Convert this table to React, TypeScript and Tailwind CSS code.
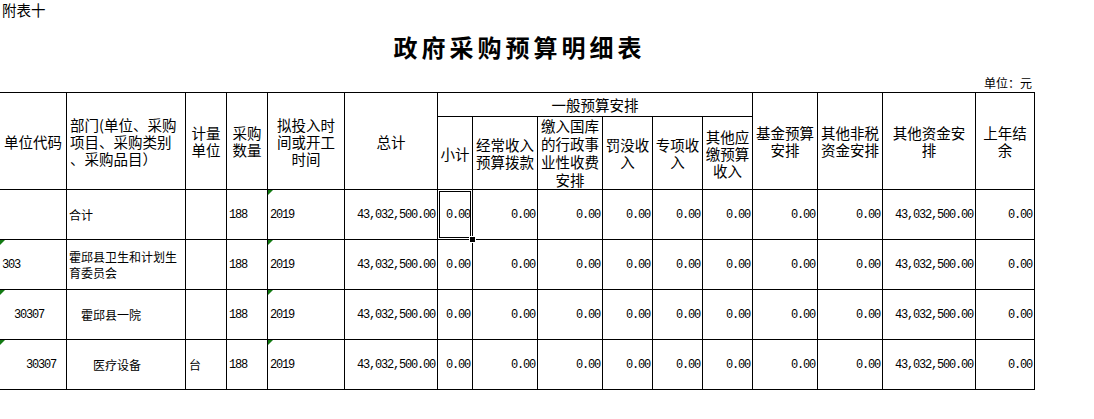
const cjk = "font-['Noto_Sans_CJK_SC',sans-serif]";
const mono = "font-['Liberation_Mono','Noto_Sans_CJK_SC',monospace] text-[12px] tracking-[-1.2px]";

type Row = {
  code: string;
  codePad: string;
  name: string;
  namePad: string;
  unit: string;
  codeMark: boolean;
};

const rows: Row[] = [
  { code: "", codePad: "pl-[2px]", name: "合计", namePad: "pl-[2px]", unit: "", codeMark: false },
  { code: "303", codePad: "pl-[2px]", name: "霍邱县卫生和计划生育委员会", namePad: "pl-[2px]", unit: "", codeMark: true },
  { code: "30307", codePad: "pl-[14px]", name: "霍邱县一院", namePad: "pl-[14px]", unit: "", codeMark: true },
  { code: "30307", codePad: "pl-[26px]", name: "医疗设备", namePad: "pl-[26px]", unit: "台", codeMark: true },
];

const amounts = [
  "43,032,500.00",
  "0.00",
  "0.00",
  "0.00",
  "0.00",
  "0.00",
  "0.00",
  "0.00",
  "0.00",
  "43,032,500.00",
  "0.00",
];

function Mark() {
  return (
    <span className="absolute left-0 top-0 w-0 h-0 border-t-[5px] border-t-[#127a12] border-r-[5px] border-r-transparent" />
  );
}

function Head({ className = "", children }: { className?: string; children: React.ReactNode }) {
  return (
    <div className={`bg-white flex items-center justify-center text-center text-[14.5px] leading-[17px] ${className}`}>
      <div>{children}</div>
    </div>
  );
}

export default function App() {
  return (
    <div className={`w-[1094px] h-[419px] bg-white text-black ${cjk}`}>
      <div className="w-[1035px]">
        <div className="h-[20px] leading-[20px] text-[14.5px] pl-[2px]">附表十</div>
        <div className="h-[54px] leading-[54px] text-center text-[24px] font-bold tracking-[4px] pl-[4px]">
          政府采购预算明细表
        </div>
        <div className="h-[18px] leading-[18px] text-right text-[12px] pr-[3px]">单位：元</div>

        <div className="grid grid-cols-[66px_118px_40px_40px_76px_92px_34px_64px_64px_49px_49px_49px_64px_64px_92px_58px] grid-rows-[23px_72px_49px_49px_49px_49px] gap-px bg-black pt-px pr-px pb-px">
          {/* header */}
          <Head className="row-span-2">单位代码</Head>
          <div className="row-span-2 bg-white flex items-center text-[14.5px] leading-[17px] pl-[3px]">
            <div>
              部门(单位、采购
              <br />
              项目、采购类别
              <br />
              、采购品目）
            </div>
          </div>
          <Head className="row-span-2">
            计量
            <br />
            单位
          </Head>
          <Head className="row-span-2">
            采购
            <br />
            数量
          </Head>
          <Head className="row-span-2">
            拟投入时
            <br />
            间或开工
            <br />
            时间
          </Head>
          <Head className="row-span-2">总计</Head>
          <Head className="col-span-6">一般预算安排</Head>
          <Head className="row-span-2">
            基金预算
            <br />
            安排
          </Head>
          <Head className="row-span-2">
            其他非税
            <br />
            资金安排
          </Head>
          <Head className="row-span-2">
            其他资金安
            <br />
            排
          </Head>
          <Head className="row-span-2">
            上年结
            <br />
            余
          </Head>
          <Head>小计</Head>
          <Head>
            经常收入
            <br />
            预算拨款
          </Head>
          <Head className="leading-[18px]">
            缴入国库
            <br />
            的行政事
            <br />
            业性收费
            <br />
            安排
          </Head>
          <Head>
            罚没收
            <br />
            入
          </Head>
          <Head>
            专项收
            <br />
            入
          </Head>
          <Head>
            其他应
            <br />
            缴预算
            <br />
            收入
          </Head>

          {/* body */}
          {rows.map((r, i) => (
            <div key={i} className="contents">
              <div className={`relative bg-white flex items-center text-[12px] ${r.codePad}`}>
                {r.codeMark && <Mark />}
                <span className={mono}>{r.code}</span>
              </div>
              <div className={`bg-white flex items-center text-[12px] leading-[16px] ${r.namePad}`}>
                <div>{r.name}</div>
              </div>
              <div className="bg-white flex items-center text-[12px] pl-[3px]">{r.unit}</div>
              <div className="bg-white flex items-center pl-[2px]">
                <span className={mono}>188</span>
              </div>
              <div className="relative bg-white flex items-center pl-[2px]">
                <Mark />
                <span className={mono}>2019</span>
              </div>
              {amounts.map((a, j) => (
                <div
                  key={j}
                  className={`bg-white flex items-center justify-end pr-[2px] ${
                    i === 0 && j === 1 ? "relative z-10" : ""
                  }`}
                >
                  <span className={mono}>{a}</span>
                  {i === 0 && j === 1 && (
                    <>
                      <span className="absolute inset-[1px] border border-black" />
                      <span className="absolute -right-[4px] -bottom-[4px] w-[7px] h-[7px] bg-black border border-white" />
                    </>
                  )}
                </div>
              ))}
            </div>
          ))}
        </div>
      </div>
    </div>
  );
}
